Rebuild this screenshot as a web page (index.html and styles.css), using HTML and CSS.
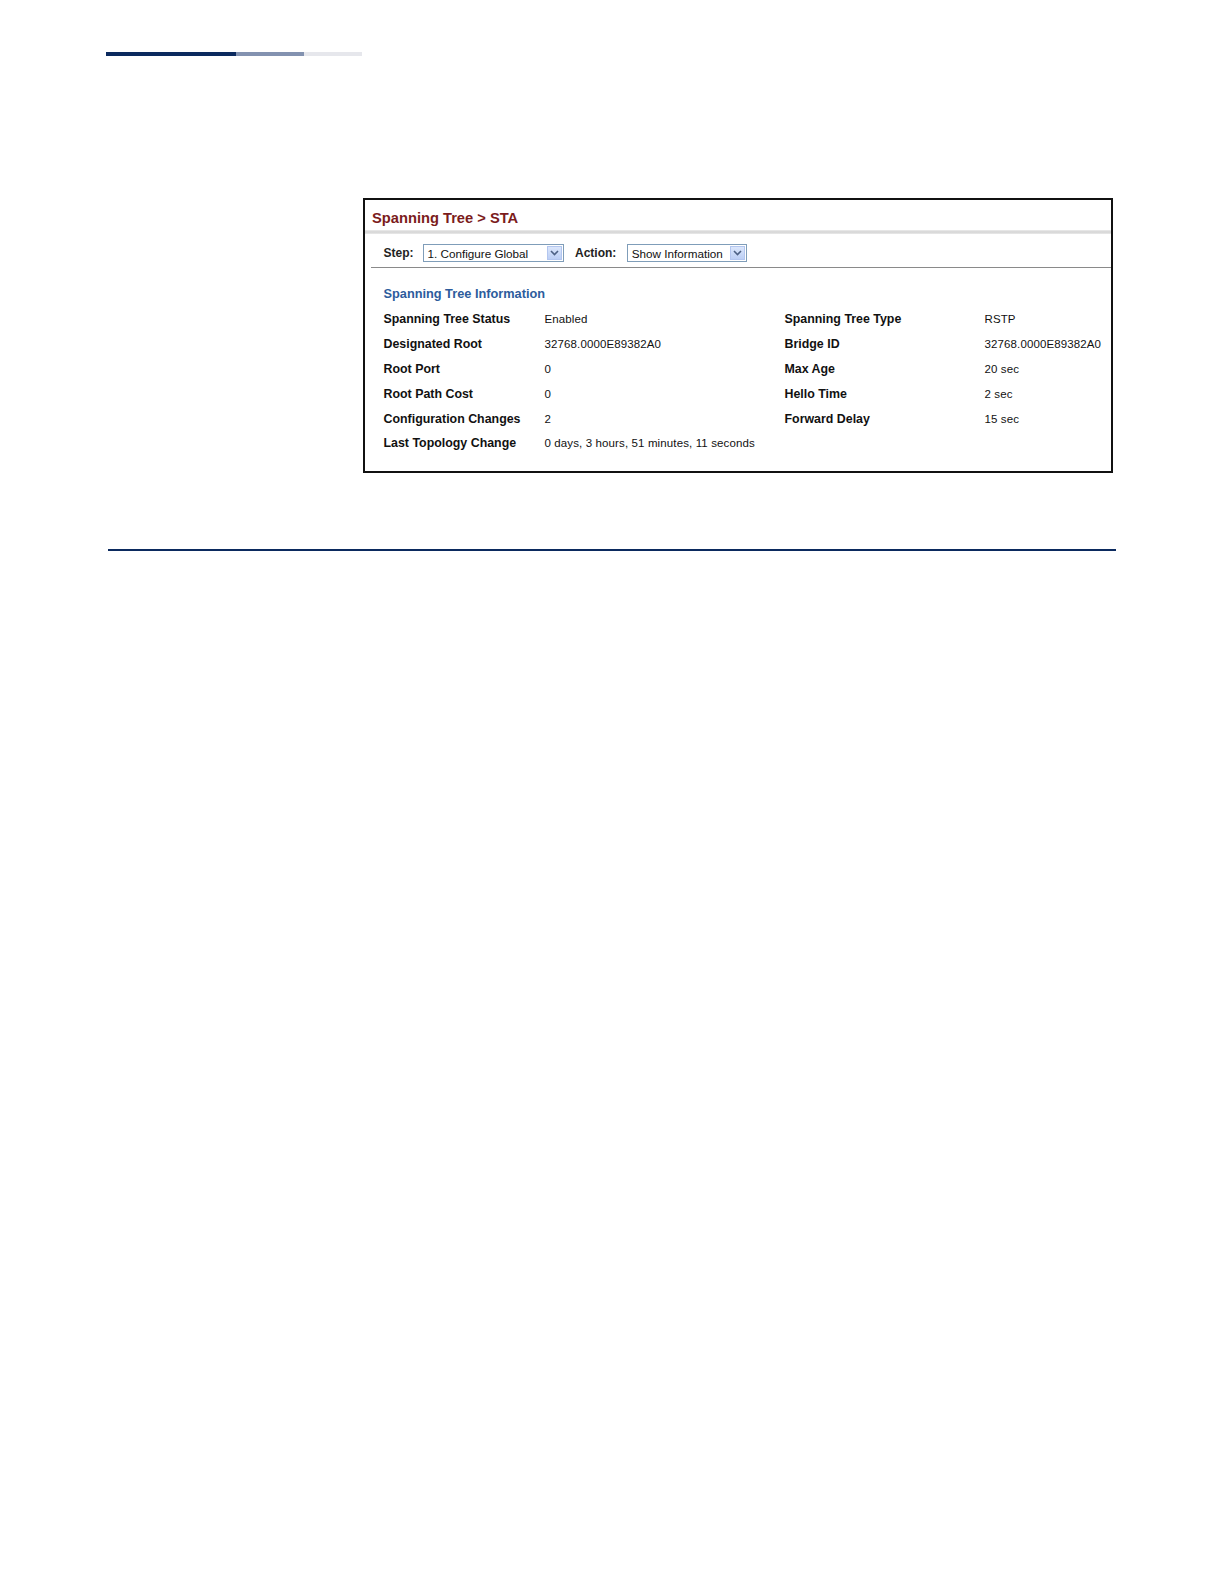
FILE: index.html
```html
<!DOCTYPE html>
<html>
<head>
<meta charset="utf-8">
<link rel="stylesheet" href="styles.css">
</head>
<body>
<div class="topbar">
  <div class="seg seg-dark"></div>
  <div class="seg seg-mid"></div>
  <div class="seg seg-light"></div>
</div>

<div class="figure">
  <div class="title">Spanning Tree &gt; STA</div>
  <div class="sep"></div>
  <div class="toolbar">
    <span class="tlabel">Step:</span>
    <div class="select sel-step">
      <span class="sel-text">1. Configure Global</span>
      <span class="sel-btn"><svg width="9" height="6" viewBox="0 0 9 6"><path d="M1 1 L4.5 4.5 L8 1" fill="none" stroke="#4d6185" stroke-width="1.6"/></svg></span>
    </div>
    <span class="tlabel tlabel-action">Action:</span>
    <div class="select sel-action">
      <span class="sel-text">Show Information</span>
      <span class="sel-btn"><svg width="9" height="6" viewBox="0 0 9 6"><path d="M1 1 L4.5 4.5 L8 1" fill="none" stroke="#4d6185" stroke-width="1.6"/></svg></span>
    </div>
  </div>
  <div class="rule"></div>
  <div class="content">
    <div class="section-title">Spanning Tree Information</div>
    <div class="grid">
      <div class="lbl">Spanning Tree Status</div><div class="val">Enabled</div>
      <div class="lbl">Spanning Tree Type</div><div class="val">RSTP</div>

      <div class="lbl">Designated Root</div><div class="val">32768.0000E89382A0</div>
      <div class="lbl">Bridge ID</div><div class="val">32768.0000E89382A0</div>

      <div class="lbl">Root Port</div><div class="val">0</div>
      <div class="lbl">Max Age</div><div class="val">20 sec</div>

      <div class="lbl">Root Path Cost</div><div class="val">0</div>
      <div class="lbl">Hello Time</div><div class="val">2 sec</div>

      <div class="lbl">Configuration Changes</div><div class="val">2</div>
      <div class="lbl">Forward Delay</div><div class="val">15 sec</div>

      <div class="lbl">Last Topology Change</div><div class="val val-wide">0 days, 3 hours, 51 minutes, 11 seconds</div>
    </div>
  </div>
</div>

<div class="bottom-rule"></div>
</body>
</html>
```

FILE: styles.css
```css
html, body {
  margin: 0;
  padding: 0;
  background: #ffffff;
  font-family: "Liberation Sans", Arial, sans-serif;
  color: #111111;
}

.topbar {
  display: flex;
  margin: 52px 0 0 106px;
  height: 4px;
}
.seg { height: 4px; }
.seg-dark { width: 130px; background: #0b2a5e; }
.seg-mid { width: 68px; background: #8392b0; }
.seg-light { width: 58px; background: #e6e7ec; }

.figure {
  margin: 142px 0 0 363px;
  width: 746px;
  height: 271px;
  border: 2px solid #111111;
  box-sizing: content-box;
}

.title {
  height: 30px;
  padding-left: 7px;
  padding-top: 11px;
  line-height: 15px;
  font-size: 14.7px;
  font-weight: bold;
  color: #7b1c1c;
  box-sizing: border-box;
}

.sep {
  height: 4px;
  background: linear-gradient(to bottom, #ececec 0%, #d4d4d4 50%, #eaeaea 100%);
}

.toolbar {
  display: flex;
  align-items: center;
  height: 33px;
  padding-left: 18.5px;
  padding-top: 5.6px;
  box-sizing: border-box;
}

.tlabel {
  font-size: 12px;
  font-weight: bold;
  color: #222222;
}
.tlabel-action { margin-left: 11.5px; }

.select {
  display: flex;
  align-items: center;
  height: 18px;
  border: 1px solid #7f9db9;
  background: #ffffff;
  box-sizing: border-box;
  margin-left: 9px;
}
.sel-step { width: 141px; }
.sel-action { width: 120px; margin-left: 10.5px; }

.sel-text {
  flex: 1;
  font-size: 11.7px;
  padding-left: 4px;
  color: #111111;
  white-space: nowrap;
}

.sel-btn {
  width: 15px;
  height: 14px;
  margin-right: 1px;
  display: flex;
  align-items: center;
  justify-content: center;
  background: linear-gradient(to bottom, #dbe6fb 0%, #bccff5 100%);
  border: 1px solid #b3c6ef;
  box-sizing: border-box;
}

.rule {
  margin-left: 6px;
  height: 1px;
  background: #8a8a8a;
}

.content {
  padding-left: 18.5px;
  padding-top: 19.3px;
}

.section-title {
  font-size: 12.75px;
  font-weight: bold;
  color: #2d5c9c;
  height: 14px;
  line-height: 14px;
}

.grid {
  display: grid;
  grid-template-columns: 161px 240px 200px 1fr;
  grid-auto-rows: 24.9px;
  margin-top: 5.25px;
  align-items: center;
}

.lbl {
  font-size: 12.4px;
  font-weight: bold;
  color: #111111;
  white-space: nowrap;
}

.val {
  font-size: 11.5px;
  letter-spacing: 0.12px;
  color: #111111;
  white-space: nowrap;
}

.val-wide { grid-column: span 3; }

.bottom-rule {
  margin: 76px 0 0 108px;
  width: 1008px;
  height: 2px;
  background: #0b2a5e;
}
```
